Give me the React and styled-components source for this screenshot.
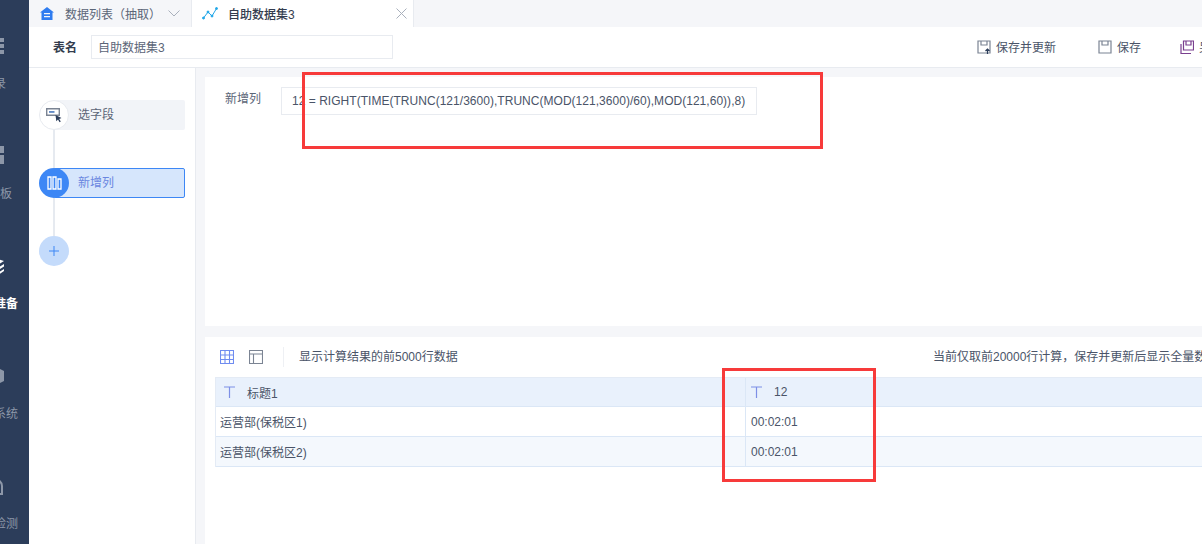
import React from "react";
import styled, { createGlobalStyle } from "styled-components";

const GlobalStyle = createGlobalStyle`
  html, body, #root { margin: 0; padding: 0; height: 100%; }
  body {
    overflow: hidden;
    font-family: "Liberation Sans", "Noto Sans CJK SC", sans-serif;
    font-size: 12px;
    color: #4a5468;
  }
  * { box-sizing: border-box; }
`;

const Page = styled.div`
  position: relative;
  display: flex;
  width: 1202px;
  height: 544px;
  overflow: hidden;
  background: #fff;
`;

const Sidebar = styled.nav`
  flex: 0 0 29px;
  overflow: hidden;
  background: #2c3d5a;
`;

// the nav is scrolled sideways in the reference, only its right end shows
const SideList = styled.div`
  display: flex;
  flex-direction: column;
  width: 60px;
  margin-left: -36px;
  padding-top: 36px;
`;

const SideItem = styled.div`
  display: flex;
  flex-direction: column;
  align-items: center;
  flex: 0 0 110px;
  color: ${p => (p.active ? "#fff" : "#8d97a8")};
  font-weight: ${p => (p.active ? 700 : 400)};
  line-height: 14px;
  white-space: nowrap;
  svg { display: block; width: 20px; height: 20px; margin-bottom: 21px; }
`;

const Main = styled.div`
  flex: 1;
  min-width: 0;
  display: flex;
  flex-direction: column;
`;

const TabBar = styled.div`
  flex: 0 0 27px;
  display: flex;
  background: #f5f6f9;
`;

const Tab = styled.div`
  display: flex;
  align-items: center;
  width: ${p => p.width}px;
  padding: 0 ${p => (p.active ? 6 : 11)}px 0 ${p => (p.active ? 10 : 11)}px;
  background: ${p => (p.active ? "#fff" : "transparent")};
  border-left: ${p => (p.active ? "1px solid #e8ebf0" : "0")};
  border-right: ${p => (p.active ? "1px solid #e8ebf0" : "0")};
  color: ${p => (p.active ? "#333c4e" : "#5b6577")};
  font-weight: ${p => (p.active ? 500 : 400)};
  white-space: nowrap;
  svg { flex: none; }
`;

const TabLabel = styled.span`
  flex: 1;
  padding-left: ${p => p.pad}px;
`;

const ToolBar = styled.div`
  flex: 0 0 41px;
  display: flex;
  align-items: center;
  padding: 0 0 1px 24px;
  background: #fff;
  border-bottom: 1px solid #e8ebf0;
`;

const FieldName = styled.span`
  width: 38px;
  color: #333c4e;
  font-weight: 700;
`;

const NameInput = styled.div`
  display: flex;
  align-items: center;
  width: 302px;
  height: 24px;
  padding-left: 6px;
  border: 1px solid #e8ebf0;
  color: #5b6577;
`;

const Actions = styled.div`
  margin-left: auto;
  display: flex;
  align-items: center;
  flex: 0 0 225px;
  overflow: hidden;
  white-space: nowrap;
`;

const Action = styled.div`
  display: flex;
  align-items: center;
  flex: none;
  gap: 5px;
  margin-right: ${p => p.gap}px;
  color: #4a5468;
  svg { flex: none; }
`;

const Body = styled.div`
  flex: 1;
  min-height: 0;
  display: flex;
`;

const Steps = styled.div`
  flex: 0 0 167px;
  display: flex;
  flex-direction: column;
  padding: 32px 10px 0 10px;
  background: #fff;
  border-right: 1px solid #e8ebf0;
`;

const Step = styled.div`
  position: relative;
  display: flex;
  align-items: center;
  height: 30px;
  margin-left: 15px;
  padding: 0 0 3px ${p => (p.active ? 23 : 24)}px;
  border-radius: 2px;
  background: ${p => (p.active ? "#d6e6fc" : "#f2f4f8")};
  border: ${p => (p.active ? "1px solid #3d87f5" : "0")};
  color: ${p => (p.active ? "#6a86e0" : "#5b6577")};
`;

const StepDot = styled.div`
  position: absolute;
  left: ${p => (p.active ? -16 : -15)}px;
  top: ${p => (p.active ? -1 : 0)}px;
  width: 30px;
  height: 30px;
  display: flex;
  align-items: center;
  justify-content: center;
  border-radius: 50%;
  background: ${p => (p.active ? "#3d87f5" : "#fff")};
  border: ${p => (p.active ? "0" : "1px solid #e8ebf0")};
`;

const StepLine = styled.div`
  width: 2px;
  height: 38px;
  margin-left: 14px;
  background: #e6eaf0;
`;

const AddStep = styled.div`
  display: flex;
  align-items: center;
  justify-content: center;
  width: 30px;
  height: 30px;
  border-radius: 50%;
  background: #c4dbfb;
`;

const Content = styled.div`
  flex: 1;
  min-width: 0;
  display: flex;
  flex-direction: column;
  gap: 11px;
  padding: 9px 0 0 9px;
  background: #f5f6f9;
`;

const FormulaPanel = styled.div`
  flex: 0 0 249px;
  display: flex;
  align-items: flex-start;
  padding: 10px 0 0 20px;
  background: #fff;
`;

const FormulaLabel = styled.span`
  width: 56px;
  padding-top: 2px;
  color: #5b6577;
`;

const Formula = styled.div`
  display: flex;
  align-items: center;
  width: 476px;
  height: 28px;
  padding-left: 10px;
  border: 1px solid #e8ebf0;
  color: #4a5468;
  letter-spacing: 0.03px;
  white-space: nowrap;
`;

const PreviewPanel = styled.div`
  flex: 1;
  min-height: 0;
  padding: 0 0 0 10px;
  background: #fff;
`;

const PreviewBar = styled.div`
  display: flex;
  align-items: center;
  height: 40px;
  white-space: nowrap;
`;

const ViewIcon = styled.span`
  display: flex;
  width: ${p => (p.first ? 29 : 28)}px;
  margin-left: ${p => (p.first ? 5 : 0)}px;
`;

const Divider = styled.span`
  width: 1px;
  height: 20px;
  margin: 0 15px 0 6px;
  background: #eef0f4;
`;

const BarText = styled.span`
  padding-bottom: 3px;
  margin-left: ${p => (p.end ? "auto" : 0)};
  flex: ${p => (p.end ? "0 0 269px" : "none")};
  overflow: hidden;
`;

const Table = styled.div`
  border-top: 1px solid #e4ebf5;
  border-left: 1px solid #e4ebf5;
`;

const Row = styled.div`
  display: grid;
  grid-template-columns: 529px 1fr;
  height: ${p => (p.head ? 29 : 30)}px;
  background: ${p => (p.head ? "#e9f1fc" : p.alt ? "#f4f8fd" : "#fff")};
  border-bottom: 1px solid #dbe7f6;
`;

const Cell = styled.div`
  display: flex;
  align-items: center;
  gap: 12px;
  padding-left: ${p => (p.head ? 8 : 4)}px;
  color: #4a5468;
  white-space: nowrap;
  & + & {
    border-left: 1px solid #dbe7f6;
    padding-left: ${p => (p.head ? 9 : 5)}px;
  }
`;

const Highlight = styled.div`
  position: absolute;
  left: ${p => p.x}px;
  top: ${p => p.y}px;
  width: ${p => p.w}px;
  height: ${p => p.h}px;
  border: 3px solid #f73a3a;
  pointer-events: none;
`;

const TypeIcon = () => (
  <svg width="11" height="12" viewBox="0 0 11 12" fill="none" stroke="#7d8fe6" strokeWidth="1.2">
    <path d="M0 1h11M5.500 1v11" />
  </svg>
);

const SaveIcon = ({ up }) => (
  <svg width="14" height="14" viewBox="0 0 14 14" fill="none" stroke="#7b8493" strokeWidth="1.2">
    <path d="M1 1h12v12H1z" />
    <path d="M4 1v4h6V1" />
    {up && <path d="M10.500 14V9M8.500 11l2-2 2 2" stroke="#2c3d5a" />}
  </svg>
);

const App = () => (
  <Page>
    <GlobalStyle />
    <Sidebar>
      <SideList>
        <SideItem>
          <svg viewBox="0 0 20 20" fill="#8d97a8">
            <path d="M0 2h20v4H0zM0 8h20v4H0zM0 14h20v4H0z" />
          </svg>
          目录
        </SideItem>
        <SideItem>
          <svg viewBox="0 0 20 20" fill="#8d97a8">
            <path d="M1 0h8v8H1zM11 0h9v7h-9zM1 10h8v8H1zM11 9h9v9h-9z" />
          </svg>
          仪表板
        </SideItem>
        <SideItem active>
          <svg viewBox="0 0 20 20" fill="#fff">
            <path d="M10 2l10 3-5 3-5-1zM20 8l-5 3-5-1v2.500l5 1 5-3zM20 13l-5 3-5-1v2l5 1.500 5-3.500z" />
          </svg>
          数据准备
        </SideItem>
        <SideItem>
          <svg viewBox="0 0 20 20" fill="#8d97a8">
            <path d="M10 0l10 5v10l-10 5-10-5V5zM10 7a3 3 0 100 6 3 3 0 000-6z" />
          </svg>
          管理系统
        </SideItem>
        <SideItem>
          <svg viewBox="0 0 20 20" fill="none" stroke="#8d97a8" strokeWidth="2">
            <path d="M2 18V10a8 7 0 0116 0v8zM7 20h6" />
          </svg>
          智能检测
        </SideItem>
      </SideList>
    </Sidebar>
    <Main>
      <TabBar>
        <Tab width={162}>
          <svg width="14" height="13" viewBox="0 0 14 13" fill="#2f7cf0">
            <path d="M7 0l7 5.500h-1.500V13h-11V5.500H0z" />
            <path d="M4 6h6v1.300H4zM4 9h6v1.300H4z" fill="#f5f6f9" />
          </svg>
          <TabLabel pad={11}>数据列表（抽取）</TabLabel>
          <svg width="12" height="7" viewBox="0 0 12 7" fill="none" stroke="#a9b0bc">
            <path d="M.5.5L6 6 11.500.5" />
          </svg>
        </Tab>
        <Tab width={223} active>
          <svg width="16" height="13" viewBox="0 0 16 13" fill="#22a7e8" stroke="#22a7e8">
            <path d="M1.500 11L6 5l4 4 4.500-7.500" fill="none" />
            <circle cx="1.500" cy="11" r="1" />
            <circle cx="6" cy="5" r="1" />
            <circle cx="10" cy="9" r="1" />
            <circle cx="14.500" cy="1.500" r="1" />
          </svg>
          <TabLabel pad={10}>自助数据集3</TabLabel>
          <svg width="11" height="11" viewBox="0 0 11 11" fill="none" stroke="#a9b0bc">
            <path d="M.5.5l10 10M10.500.5l-10 10" />
          </svg>
        </Tab>
      </TabBar>
      <ToolBar>
        <FieldName>表名</FieldName>
        <NameInput>自助数据集3</NameInput>
        <Actions>
          <Action gap={42}><SaveIcon up />保存并更新</Action>
          <Action gap={39}><SaveIcon />保存</Action>
          <Action gap={0}>
            <svg width="14" height="14" viewBox="0 0 14 14" fill="none" stroke="#7a3f8f" strokeWidth="1.2">
              <path d="M3.500 1h10v9h-10zM6 1v4h5V1M1 4v9.500h10" />
            </svg>
            另存为
          </Action>
        </Actions>
      </ToolBar>
      <Body>
        <Steps>
          <Step>
            <StepDot>
              <svg width="16" height="16" viewBox="0 0 16 16">
                <path d="M.7 1.700h12.600v6.600H.7z" fill="#fff" stroke="#7b8493" strokeWidth="1.400" />
                <path d="M3 4.200h5.500v1.500H3z" fill="#3d6fb8" />
                <path d="M9.500 8l6 3-2.300.9 1.600 2.500-1.200.8-1.600-2.600-1.700 1.700z" fill="#2c3d5a" />
              </svg>
            </StepDot>
            选字段
          </Step>
          <StepLine />
          <Step active>
            <StepDot active>
              <svg width="15" height="14" viewBox="0 0 15 14" fill="none" stroke="#fff" strokeWidth="1.300">
                <path d="M1 1h3v12H1zM6 1h3v12H6zM11 3h3v10h-3z" />
              </svg>
            </StepDot>
            新增列
          </Step>
          <StepLine />
          <AddStep>
            <svg width="10" height="10" viewBox="0 0 10 10" fill="none" stroke="#3d87f5">
              <path d="M0 5h10M5 0v10" />
            </svg>
          </AddStep>
        </Steps>
        <Content>
          <FormulaPanel>
            <FormulaLabel>新增列</FormulaLabel>
            <Formula>12 = RIGHT(TIME(TRUNC(121/3600),TRUNC(MOD(121,3600)/60),MOD(121,60)),8)</Formula>
          </FormulaPanel>
          <PreviewPanel>
            <PreviewBar>
              <ViewIcon first>
                <svg width="14" height="14" viewBox="0 0 14 14" fill="none" stroke="#6f8cf0" strokeWidth="1.100">
                  <path d="M.5.5h13v13H.5zM.5 5h13M.5 9.500h13M5 .5v13M9.500.5v13" />
                </svg>
              </ViewIcon>
              <ViewIcon>
                <svg width="14" height="14" viewBox="0 0 14 14" fill="none" stroke="#7b8493" strokeWidth="1.100">
                  <path d="M.5.5h13v13H.5zM.5 4h13M4.500 4v9.500" />
                </svg>
              </ViewIcon>
              <Divider />
              <BarText>显示计算结果的前5000行数据</BarText>
              <BarText end>当前仅取前20000行计算，保存并更新后显示全量数据</BarText>
            </PreviewBar>
            <Table>
              <Row head>
                <Cell head><TypeIcon />标题1</Cell>
                <Cell head><TypeIcon />12</Cell>
              </Row>
              <Row>
                <Cell>运营部(保税区1)</Cell>
                <Cell>00:02:01</Cell>
              </Row>
              <Row alt>
                <Cell>运营部(保税区2)</Cell>
                <Cell>00:02:01</Cell>
              </Row>
            </Table>
          </PreviewPanel>
        </Content>
      </Body>
    </Main>
    <Highlight x={302} y={72} w={521} h={77} />
    <Highlight x={722} y={368} w={154} h={114} />
  </Page>
);

export default App;
